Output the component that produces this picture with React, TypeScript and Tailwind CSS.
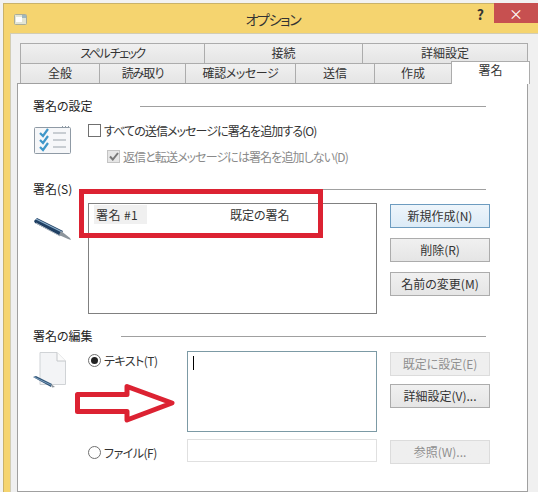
const font = { fontFamily: '"Noto Sans CJK JP", "Liberation Sans", sans-serif' };

const TabItem = ({ label, width, tight = "" }: { label: string; width: string; tight?: string }) => (
    <div className={`${width} ${tight} h-[20px] shrink-0 flex items-center justify-center pb-[2px] border-t border-l border-r border-[#acacac] -mr-px bg-gradient-to-b from-[#f0f0f0] to-[#e5e5e5] text-[12px] leading-none text-[#333]`}>
        {label}
    </div>
);

const SectionHeading = ({ label, width }: { label: string; width: string }) => (
    <div className="flex items-center h-[18px] mr-[4px]">
        <span className={`${width} text-[12px] leading-none text-[#222] shrink-0`}>{label}</span>
        <div className="flex-1 h-px bg-[#a0a0a0]" />
    </div>
);

const Button = ({ label, kind = "normal" }: { label: string; kind?: "normal" | "focus" | "disabled" }) => {
    const cls = {
        normal: "border-[#acacac] from-[#f0f0f0] to-[#e5e5e5] text-[#333]",
        focus: "border-[#6d9cc0] from-[#eef5fb] to-[#dcebf7] text-[#333]",
        disabled: "border-[#dcdcdc] from-[#efefef] to-[#efefef] text-[#8f8f8f]",
    }[kind];
    return (
        <div className={`w-[100px] h-[24px] shrink-0 flex items-center justify-center border bg-gradient-to-b ${cls} text-[12px] leading-none`}>
            {label}
        </div>
    );
};

const Radio = ({ checked = false }: { checked?: boolean }) => (
    <div className="w-[13px] h-[13px] rounded-full border border-[#707070] bg-white flex items-center justify-center shrink-0">
        {checked && <div className="w-[7px] h-[7px] rounded-full bg-[#222]" />}
    </div>
);

const ChecklistIcon = () => (
    <svg width="38" height="29" viewBox="0 0 38 29">
        <rect x="0.5" y="1.5" width="36" height="26" rx="1" fill="#f6f7f9" stroke="#8f9aa5" />
        <path d="M28 0.5h8" stroke="#8f9aa5" strokeDasharray="1 2" />
        <path d="M19 7h13M19 14h13M19 21h13" stroke="#9aa3ab" />
        <path d="M6 7l3 3 5-7M6 14l3 3 5-7M6 21l3 3 5-7" stroke="#3f97c9" strokeWidth="2.2" fill="none" />
    </svg>
);

const PenIcon = () => (
    <svg width="38" height="24" viewBox="0 0 38 24">
        <path d="M0 3L3 0L29 13L26 18L1 5Z" fill="#1f3f63" />
        <path d="M2 1L28 14" stroke="#8fb0cc" strokeWidth="1.2" />
        <path d="M2 5L26 18" stroke="#b4bcc4" strokeWidth="1" />
        <path d="M27 13L36 20L37 22L34 21L25 17Z" fill="#8d959c" />
    </svg>
);

const DocIcon = () => (
    <svg width="34" height="36" viewBox="0 0 34 36">
        <path d="M7 0.5H24L32.5 9V32.5H7Z" fill="#f3f4f6" stroke="#d0d3d6" />
        <path d="M24 0.5V9H32.5" fill="#fbfbfb" stroke="#c4c7ca" />
        <path d="M0 25L3 24L19 32L18 35Z" fill="#2f5478" />
        <path d="M1 25L18 33" stroke="#8fb0cc" strokeWidth="0.8" />
        <path d="M18 32L22 35L19 35.5Z" fill="#8d959c" />
    </svg>
);

const WindowIcon = () => (
    <svg width="13" height="12" viewBox="0 0 13 12">
        <rect x="0.5" y="1.5" width="12" height="10" rx="1" fill="#e3e5d4" stroke="#a8ad9b" />
        <rect x="2" y="4" width="6" height="5" fill="#fff" />
        <path d="M8 2h4v3H8z" fill="#9fb7bf" />
    </svg>
);

const App = () => {
    return (
        <div style={font} className="relative w-[538px] h-[492px] overflow-hidden bg-[#f2f2f2] pt-[3px] pl-[3px] [font-feature-settings:'palt']">
            <div className="h-[489px] flex flex-col bg-[#f5d46f] border-t border-l border-[#c9b26a]">
                <div className="h-[29px] shrink-0 flex items-start relative">
                    <div className="ml-[10px] mt-[9px]"><WindowIcon /></div>
                    <div className="flex-1 text-center text-[14px] leading-none tracking-[-1.3px] text-[#333] mt-[8px] pl-[42px]">オプション</div>
                    <div className="text-[14px] leading-none font-bold text-[#333] mt-[3px] mr-[10px]">?</div>
                    <div className="w-[44px] h-[20px] -mt-px bg-[#c75050] flex items-center justify-center text-white text-[14px] leading-none">×</div>
                </div>

                <div className="flex-1 min-h-0 ml-[6px] bg-[#f0f0f0] border-t border-l border-[#d2cdb5] flex flex-col pt-[9px]">
                    <div className="flex pl-[9px]">
                        <TabItem label="スペル チェック" width="w-[185px]" tight="tracking-[-1.6px]" />
                        <TabItem label="接続" width="w-[159px]" />
                        <TabItem label="詳細設定" width="w-[166px]" />
                    </div>
                    <div className="flex pl-[9px] h-[20px] items-end relative z-10">
                        <TabItem label="全般" width="w-[80px]" />
                        <TabItem label="読み取り" width="w-[87px]" tight="tracking-[-1px]" />
                        <TabItem label="確認メッセージ" width="w-[111px]" tight="tracking-[-0.4px]" />
                        <TabItem label="送信" width="w-[80px]" />
                        <TabItem label="作成" width="w-[78px]" />
                        <div className="w-[79px] h-[23px] -mb-px shrink-0 flex items-start justify-center pt-[2px] border-t border-l border-r border-[#acacac] bg-white text-[12px] leading-none text-[#333] pb-[4px]">
                            署名
                        </div>
                    </div>

                    <div className="flex-1 ml-[6px] w-[511px] border border-[#a0a0a0] bg-white pt-[13px] pl-[15px] pr-[37px] text-[#222]">
                        <SectionHeading label="署名の設定" width="w-[107px]" />
                        <div className="mt-[9px] flex h-[56px]">
                            <div className="w-[55px] pl-[1px] pt-[2px]"><ChecklistIcon /></div>
                            <div className="flex flex-col">
                                <div className="flex items-center h-[13px] gap-[3px]">
                                    <div className="w-[13px] h-[13px] border border-[#707070] bg-white" />
                                    <span className="text-[12px] leading-none tracking-[-0.9px] text-[#333]">すべての送信メッセージに署名を追加する(O)</span>
                                </div>
                                <div className="flex items-center h-[13px] gap-[3px] mt-[13px] ml-[19px]">
                                    <div className="w-[13px] h-[13px] border border-[#c4c4c4] bg-[#e6e6e6] flex items-center justify-center">
                                        <svg width="10" height="9" viewBox="0 0 10 9"><path d="M1 4.5L3.8 7.5L9 1" stroke="#777" strokeWidth="2" fill="none" /></svg>
                                    </div>
                                    <span className="text-[12px] leading-none tracking-[-0.9px] text-[#8a8a8a]">返信と転送メッセージには署名を追加しない(D)</span>
                                </div>
                            </div>
                        </div>

                        <SectionHeading label="署名(S)" width="w-[67px]" />
                        <div className="mt-[5px] flex h-[110px]">
                            <div className="w-[55px] shrink-0 pl-[1px] pt-[15px]"><PenIcon /></div>
                            <div className="w-[289px] shrink-0 h-[111px] border border-[#808080] pl-[5px] pt-[1px]">
                                <div className="flex items-center h-[19px] text-[12px] leading-none text-[#333]">
                                    <span className="w-[53px] h-full bg-[#f0f0f0] flex items-center pl-[2px] tracking-[0.4px]">署名 #1</span>
                                    <span className="ml-[83px]">既定の署名</span>
                                </div>
                            </div>
                            <div className="ml-[13px] mt-[1px] flex flex-col gap-[10px]">
                                <Button label="新規作成(N)" kind="focus" />
                                <Button label="削除(R)" />
                                <Button label="名前の変更(M)" />
                            </div>
                        </div>

                        <div className="mt-[14px]"><SectionHeading label="署名の編集" width="w-[88px]" /></div>
                        <div className="mt-[6px] grid grid-cols-[55px_99px_190px_100px] gap-x-0">
                            <div className="pt-[1px]"><DocIcon /></div>
                            <div className="flex items-start gap-[3px] pt-[3px]">
                                <Radio checked />
                                <span className="text-[12px] leading-[13px] tracking-[-0.5px] text-[#333]">テキスト(T)</span>
                            </div>
                            <div className="h-[81px] border border-[#7c9aa5] bg-white pl-[5px] pt-[4px]">
                                <div className="w-px h-[14px] bg-black" />
                            </div>
                            <div className="ml-[13px] mt-[1px] w-[100px] flex flex-col gap-[8px]">
                                <Button label="既定に設定(E)" kind="disabled" />
                                <Button label="詳細設定(V)..." />
                            </div>
                            <div />
                            <div className="mt-[7px] pt-[4px] flex items-center gap-[3px] h-[23px]">
                                <Radio />
                                <span className="text-[12px] leading-none tracking-[-0.5px] text-[#333]">ファイル(F)</span>
                            </div>
                            <div className="mt-[7px] h-[23px] border border-[#e0e0e0] bg-white" />
                            <div className="ml-[13px] mt-[8px]"><Button label="参照(W)..." kind="disabled" /></div>
                        </div>
                    </div>
                </div>
            </div>

            {/* annotations drawn over the dialog */}
            <div className="absolute left-[79px] top-[189px] w-[244px] h-[49px] border-[5px] border-[#dc2232]" />
            <svg className="absolute left-0 top-0" width="538" height="492" viewBox="0 0 538 492">
                <polygon points="77.5,394.5 127,394.5 127,386.5 172,403 127,420 127,411.5 77.5,411.5" fill="none" stroke="#dc2232" strokeWidth="5" strokeLinejoin="round" />
            </svg>
        </div>
    );
};

export default App;
